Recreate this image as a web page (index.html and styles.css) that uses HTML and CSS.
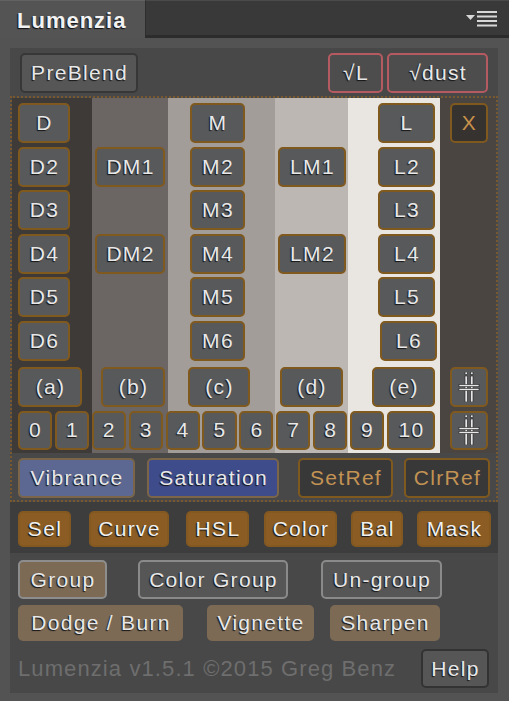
FILE: index.html
```html
<!DOCTYPE html>
<html>
<head>
<meta charset="utf-8">
<link rel="stylesheet" href="styles.css">
</head>
<body>
<div class="panel">
  <div class="tabbar">
    <div class="tab">Lumenzia</div>
    <div class="tabrest">
      <svg class="menu" width="32" height="16" viewBox="0 0 32 16">
        <polygon points="0,4 9,4 4.5,9" fill="#d8d8d8"/>
        <rect x="11" y="0" width="20" height="2" fill="#d8d8d8"/>
        <rect x="11" y="4.5" width="20" height="2" fill="#d8d8d8"/>
        <rect x="11" y="9" width="20" height="2" fill="#d8d8d8"/>
        <rect x="11" y="13.5" width="20" height="2" fill="#d8d8d8"/>
      </svg>
    </div>
  </div>
  <div class="body">
    <div class="inner">
      <div class="toprow">
        <div class="btn plain pre">PreBlend</div>
        <div class="btn red chkl">√L</div>
        <div class="btn red dust">√dust</div>
      </div>
      <div class="zone">
        <div class="grid">
          <div class="btn r1 c1 kd">D</div>
          <div class="btn r1 c3 km">M</div>
          <div class="btn r1 c5 kl">L</div>
          <div class="btn r1 c6 kx xbtn">X</div>

          <div class="btn r2 c1 kd">D2</div>
          <div class="btn r2 c2 kdm">DM1</div>
          <div class="btn r2 c3 km">M2</div>
          <div class="btn r2 c4 klm">LM1</div>
          <div class="btn r2 c5 kl">L2</div>

          <div class="btn r3 c1 kd">D3</div>
          <div class="btn r3 c3 km">M3</div>
          <div class="btn r3 c5 kl">L3</div>

          <div class="btn r4 c1 kd">D4</div>
          <div class="btn r4 c2 kdm">DM2</div>
          <div class="btn r4 c3 km">M4</div>
          <div class="btn r4 c4 klm">LM2</div>
          <div class="btn r4 c5 kl">L4</div>

          <div class="btn r5 c1 kd">D5</div>
          <div class="btn r5 c3 km">M5</div>
          <div class="btn r5 c5 kl">L5</div>

          <div class="btn r6 c1 kd">D6</div>
          <div class="btn r6 c3 km">M6</div>
          <div class="btn r6 c5 kl l6">L6</div>

          <div class="btn r7 c1 pr pa">(a)</div>
          <div class="btn r7 c2 pr pb">(b)</div>
          <div class="btn r7 c3 pr pc">(c)</div>
          <div class="btn r7 c4 pr pd">(d)</div>
          <div class="btn r7 c5 pr pe">(e)</div>
          <div class="btn r7 c6 pr kx sym">
            <svg width="22" height="30" viewBox="0 0 22 30"><g fill="#e6e6e6" stroke="#222" stroke-width="0.6"><rect x="7" y="0" width="2.4" height="2.4"/><rect x="12.6" y="0" width="2.4" height="2.4"/><rect x="7" y="4" width="2.4" height="26"/><rect x="12.6" y="4" width="2.4" height="26"/><rect x="1" y="12.5" width="20" height="2.2"/><rect x="1" y="16.3" width="20" height="2.2"/></g></svg>
          </div>

          <div class="nums r8">
            <div class="btn num">0</div>
            <div class="btn num">1</div>
            <div class="btn num">2</div>
            <div class="btn num">3</div>
            <div class="btn num">4</div>
            <div class="btn num">5</div>
            <div class="btn num">6</div>
            <div class="btn num">7</div>
            <div class="btn num">8</div>
            <div class="btn num">9</div>
            <div class="btn num wide">10</div>
          </div>
          <div class="btn r8 c6 kx sym">
            <svg width="22" height="30" viewBox="0 0 22 30"><g fill="#e6e6e6" stroke="#222" stroke-width="0.6"><rect x="7" y="0" width="2.4" height="2.4"/><rect x="12.6" y="0" width="2.4" height="2.4"/><rect x="7" y="4" width="2.4" height="26"/><rect x="12.6" y="4" width="2.4" height="26"/><rect x="1" y="12.5" width="20" height="2.2"/><rect x="1" y="16.3" width="20" height="2.2"/></g></svg>
          </div>
        </div>
        <div class="adjrow">
          <div class="btn vib">Vibrance</div>
          <div class="btn sat">Saturation</div>
          <div class="btn ref setref">SetRef</div>
          <div class="btn ref clrref">ClrRef</div>
        </div>
      </div>
      <div class="selrow">
        <div class="btn orng w-sel">Sel</div>
        <div class="btn orng w-curve">Curve</div>
        <div class="btn orng w-hsl">HSL</div>
        <div class="btn orng w-color">Color</div>
        <div class="btn orng w-bal">Bal</div>
        <div class="btn orng w-mask">Mask</div>
      </div>
      <div class="grouprow">
        <div class="btn tan bordered w-group">Group</div>
        <div class="btn plainb bordered w-cgroup">Color Group</div>
        <div class="btn plainb bordered w-ungroup">Un-group</div>
      </div>
      <div class="dodgerow">
        <div class="btn tan w-dodge">Dodge / Burn</div>
        <div class="btn tan w-vig">Vignette</div>
        <div class="btn tan w-sharp">Sharpen</div>
      </div>
      <div class="footer">
        <div class="credit">Lumenzia v1.5.1 ©2015 Greg Benz</div>
        <div class="btn help">Help</div>
      </div>
    </div>
  </div>
</div>
</body>
</html>
```

FILE: styles.css
```css
* { box-sizing: border-box; }
html, body { margin: 0; padding: 0; }
body {
  background: #535353;
  font-family: "Liberation Sans", Arial, sans-serif;
}
.panel {
  width: 509px;
  height: 701px;
  background: #535353;
  display: flex;
  flex-direction: column;
  overflow: hidden;
}
.tabbar { display: flex; height: 38px; flex: none; }
.tab {
  width: 145px;
  background: #545454;
  color: #f2f2f2;
  font-weight: bold;
  font-size: 22px;
  letter-spacing: 1px;
  padding: 7px 0 0 17px;
  text-shadow: -1px 1px 1px #111;
  border-top: 1px solid #626262;
}
.tabrest {
  flex: 1;
  background: #393939;
  border-top: 1px solid #4a4a4a;
  border-left: 1px solid #2e2e2e;
  border-bottom: 3px solid #2c2c2c;
  display: flex;
  justify-content: flex-end;
  align-items: flex-start;
  padding: 10px 11px 0 0;
}
.body { flex: 1; padding: 10px 11px 8px 10px; }
.inner {
  background: #484848;
  height: 100%;
  display: flex;
  flex-direction: column;
}

.btn {
  display: flex;
  align-items: center;
  justify-content: center;
  font-size: 21px;
  letter-spacing: 1.3px;
  padding-left: 1px;
  color: #e8e8e8;
  text-shadow: -1px 1px 1px #141414;
  border-radius: 5px;
  border: 2px solid #80591f;
  background: #58595b;
  white-space: nowrap;
}

/* top row */
.toprow {
  display: flex;
  height: 45px;
  padding: 5px 10px 0 10px;
}
.plain { background: #565656; border-color: #373737; }
.pre { width: 118px; }
.red { background: #4d4d4d; border-color: #b65a61; }
.chkl { width: 55px; margin-left: auto; }
.dust { width: 101px; margin-left: 4px; }

/* dotted zone */
.zone {
  margin-top: 3px;
  border: 2px dotted #78592f;
}
.grid {
  display: grid;
  grid-template-columns: 80px 76px 107px 73px 92px 1fr;
  grid-template-rows: repeat(6, 40px) 43px 39px;
  row-gap: 3.5px;
  padding: 5px 0 3px;
  background: linear-gradient(to right,
    #3e3a37 0, #3e3a37 80px,
    #6b6663 80px, #6b6663 156px,
    #a29d98 156px, #a29d98 263px,
    #bcb7b2 263px, #bcb7b2 336px,
    #e9e5e1 336px, #e9e5e1 428px,
    #4a4541 428px);
}
.r1 { grid-row: 1; } .r2 { grid-row: 2; } .r3 { grid-row: 3; } .r4 { grid-row: 4; }
.r5 { grid-row: 5; } .r6 { grid-row: 6; } .r7 { grid-row: 7; } .r8 { grid-row: 8; }
.c1 { grid-column: 1; } .c2 { grid-column: 2; } .c3 { grid-column: 3; }
.c4 { grid-column: 4; } .c5 { grid-column: 5; } .c6 { grid-column: 6; }

.kd, .kdm, .km, .klm, .kl, .kx, .pr { justify-self: start; }
.kd { margin-left: 6px; width: 52px; }
.kdm { margin-left: 3px; width: 70px; }
.km { margin-left: 22px; width: 55px; }
.klm { margin-left: 3px; width: 68px; }
.kl { margin-left: 30px; width: 57px; }
.l6 { margin-left: 32px; }
.kx { margin-left: 10px; width: 38px; }
.xbtn { background: #363230; color: #c8914a; text-shadow: none; }

.pr { align-self: start; height: 40px; margin-top: 3px; }
.pa { margin-left: 6px; width: 64px; }
.pb { margin-left: 9px; width: 64px; }
.pc { margin-left: 20px; width: 62px; }
.pd { margin-left: 5px; width: 63px; }
.pe { margin-left: 24px; width: 63px; }
.sym { padding-left: 0; }
.r8.sym { height: 39px; }

.nums {
  grid-column: 1 / 6;
  display: flex;
  gap: 2.8px;
  padding-left: 6px;
}
.num { width: 34.1px; height: 39px; }
.num.wide { width: 48px; }

.adjrow {
  display: flex;
  padding: 5.5px 0 2px 6px;
}
.adjrow .btn { height: 40px; }
.vib { width: 117px; background: #5c6891; border-color: #7a6548; }
.sat { width: 132px; margin-left: 12px; background: #3f4c8b; border-color: #7a6548; }
.ref { background: #383838; color: #c39353; text-shadow: none; }
.setref { width: 95px; margin-left: 19px; }
.clrref { width: 86px; margin-left: 11px; }

/* sel row */
.selrow {
  display: flex;
  align-items: flex-start;
  height: 51px;
  padding: 9px 0 0 8px;
  background: #3d3d3d;
}
.orng { height: 36px; background: #8b5d24; border-color: #835821; color: #f0f0f0; }
.w-sel { width: 53px; }
.w-curve { width: 80px; margin-left: 18px; }
.w-hsl { width: 63px; margin-left: 17px; }
.w-color { width: 73px; margin-left: 15px; }
.w-bal { width: 52px; margin-left: 14px; }
.w-mask { width: 74px; margin-left: 14px; }

/* group rows */
.grouprow {
  display: flex;
  padding: 7px 0 0 8px;
}
.bordered { height: 39px; border-color: #8a8a8a; }
.tan { background: #7c6a55; border-color: #7c6a55; }
.tan.bordered { border-color: #8d8d8d; }
.plainb { background: #565656; }
.w-group { width: 89px; }
.w-cgroup { width: 150px; margin-left: 31px; }
.w-ungroup { width: 121px; margin-left: 33px; }

.dodgerow {
  display: flex;
  margin-top: 6px;
  padding-left: 8px;
}
.dodgerow .btn { height: 36px; }
.w-dodge { width: 165px; }
.w-vig { width: 107px; margin-left: 24px; }
.w-sharp { width: 110px; margin-left: 16px; }

/* footer */
.footer {
  display: flex;
  align-items: center;
  margin-top: 8px;
  height: 39px;
  padding: 0 9px 0 8px;
}
.credit {
  color: #6e6e6e;
  font-size: 22px;
  letter-spacing: 1.1px;
  white-space: nowrap;
}
.help {
  margin-left: auto;
  width: 68px;
  height: 39px;
  background: #565656;
  border-color: #333;
}
```
